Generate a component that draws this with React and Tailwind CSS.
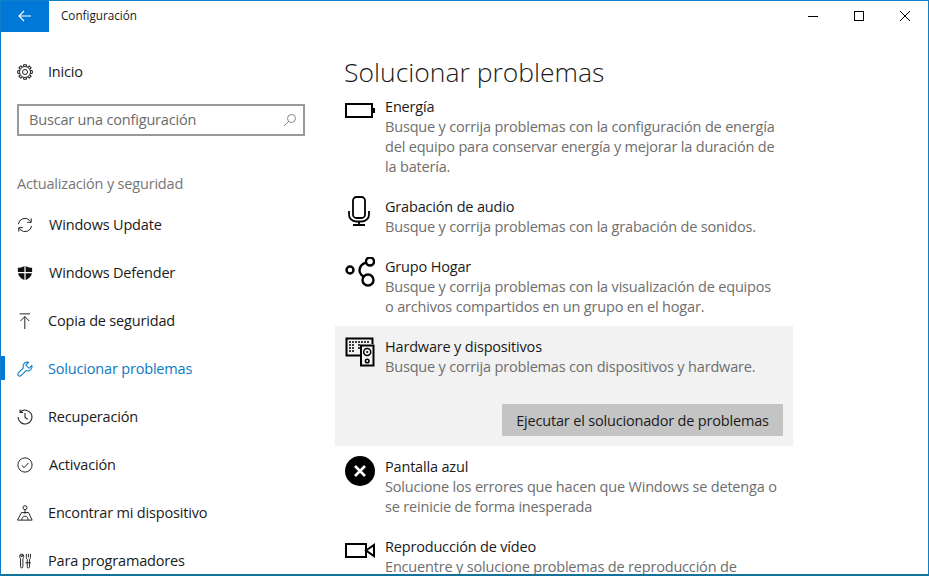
const ui = "font-['Open_Sans','Noto_Sans',sans-serif]";

function Gear() {
  const teeth = [0, 45, 90, 135, 180, 225, 270, 315];
  return (
    <svg width="16" height="16" viewBox="0 0 16 16" fill="none" stroke="#222" strokeWidth="1">
      <circle cx="8" cy="8" r="2.500" />
      <circle cx="8" cy="8" r="5.500" />
      {teeth.map((a) => (
        <path key={a} d="M6.600 2.600V.700h2.800v1.900" transform={`rotate(${a} 8 8)`} />
      ))}
    </svg>
  );
}

function Update() {
  return (
    <svg width="16" height="16" viewBox="0 0 18 18" fill="none" stroke="#222" strokeWidth="1.100">
      <path d="M1.500 8a7.500 7.500 0 0 1 12.800-4.200l1.500 1.700" />
      <path d="M16 1.500V6h-4.500" />
      <path d="M16.500 10a7.500 7.500 0 0 1-12.800 4.200l-1.500-1.700" />
      <path d="M2 16.500V12h4.500" />
    </svg>
  );
}

function Shield() {
  return (
    <svg width="16" height="16" viewBox="0 0 18 18">
      <path d="M8.300 1C6.500 2.400 4 3 1 3v5h7.300zM9.700 1c1.800 1.400 4.300 2 7.300 2v5H9.700zM1.200 9.400h7.100V17C5 15.800 2 13.500 1.200 9.400zM9.700 9.400h7.100C16 13.500 13 15.800 9.700 17z" fill="#111" />
    </svg>
  );
}

function Backup() {
  return (
    <svg width="16" height="16" viewBox="0 0 18 18" fill="none" stroke="#222" strokeWidth="1.100">
      <path d="M3 1h11.500M8.800 18V4M3.800 9l5-5 5 5" />
    </svg>
  );
}

function Wrench() {
  return (
    <svg width="16" height="16" viewBox="0 0 18 18" fill="none" stroke="#0b7ac4" strokeWidth="1.200">
      <path d="M11.500 1.200a4.800 4.800 0 0 0-4.300 6.600L1.600 13.400a2.100 2.100 0 0 0 3 3L10.200 10.800a4.800 4.800 0 0 0 6.500-5.700L13.500 8.200l-3.600-3.700 3-3a4.800 4.800 0 0 0-1.400-.3z" />
    </svg>
  );
}

function History() {
  return (
    <svg width="16" height="16" viewBox="0 0 18 18" fill="none" stroke="#222" strokeWidth="1.200">
      <path d="M3.500 3.500A7.800 7.800 0 1 1 1.200 9" />
      <path d="M3.500 .500v3.300h3.300M9 4.500V9.500l3 2" />
    </svg>
  );
}

function Check() {
  return (
    <svg width="16" height="16" viewBox="0 0 18 18" fill="none" stroke="#222" strokeWidth="1.100">
      <circle cx="9" cy="9" r="8" />
      <path d="M5.500 9.500l2.500 2.500 5-5.500" />
    </svg>
  );
}

function Find() {
  return (
    <svg width="16" height="16" viewBox="0 0 18 18" fill="none" stroke="#222" strokeWidth="1.100">
      <circle cx="9" cy="3" r="2.200" />
      <path d="M9 5.200V10M5 8.500h8L17 17H.500zM5.500 17c0-2.800 1.500-4.500 3.500-4.500s3.500 1.700 3.500 4.500" />
    </svg>
  );
}

function Dev() {
  return (
    <svg width="16" height="16" viewBox="0 0 18 18" fill="none" stroke="#222" strokeWidth="1.100">
      <path d="M4.500 1C3.500 1.500 3 2.500 3 4s.8 2 1 2.500V15.500a1.300 1.300 0 0 0 2.600 0V6.500C6.800 6 7.500 5.500 7.500 4S7 1.500 6 1v3H4.500z" />
      <path d="M10.500 1v4c0 1 .5 1.500 1 2v8.500a1.300 1.300 0 0 0 2.600 0V7c.5-.5 1-1 1-2V1M12.800 1v4M9.500 11h6" />
    </svg>
  );
}

function Battery() {
  return (
    <svg width="30" height="15" viewBox="0 0 30 15" fill="none">
      <rect x="1" y="1" width="26" height="13" stroke="#000" strokeWidth="2" />
      <rect x="28" y="5" width="2" height="5" fill="#000" />
    </svg>
  );
}

function Mic() {
  return (
    <svg width="30" height="30" viewBox="0 0 30 30" fill="none" stroke="#000" strokeWidth="1.800">
      <rect x="8" y="1" width="12" height="21" rx="3.500" />
      <path d="M4 15v3.500a7 7 0 0 0 7 7h6a7 7 0 0 0 7-7V15M14 25.500V29M8 29h12" />
    </svg>
  );
}

function Group() {
  return (
    <svg width="30" height="32" viewBox="0 0 30 32" fill="none" stroke="#000" strokeWidth="2.400">
      <circle cx="5" cy="13" r="3.500" />
      <circle cx="25" cy="4.500" r="4" />
      <circle cx="23" cy="23" r="5.500" />
      <path d="M21.500 5.500C15 7 11 15 19 20" />
    </svg>
  );
}

function Hardware() {
  return (
    <svg width="30" height="30" viewBox="0 0 30 30" fill="none" stroke="#000">
      <path d="M15 18.500H1.500V1.500h26V7" strokeWidth="2" />
      <path d="M4 5h21M4 8h6M4 11h6M4 14h6M13 8h3M13 11h3" strokeWidth="1.500" strokeDasharray="2 1" />
      <rect x="16" y="8.500" width="12.500" height="20" fill="#f2f2f2" strokeWidth="2" />
      <circle cx="22.200" cy="15" r="3.500" strokeWidth="1.500" />
      <circle cx="22.200" cy="15" r="1" fill="#000" stroke="none" />
      <circle cx="22.200" cy="24" r="1.800" strokeWidth="1.500" />
    </svg>
  );
}

function Blue() {
  return (
    <svg width="30" height="30" viewBox="0 0 30 30">
      <circle cx="15" cy="15" r="15" fill="#000" />
      <path d="M10 10l10 10M20 10L10 20" stroke="#fff" strokeWidth="2.600" />
    </svg>
  );
}

function Video() {
  return (
    <svg width="30" height="15" viewBox="0 0 30 15" fill="none" stroke="#000" strokeWidth="2">
      <rect x="1" y="1" width="20" height="13" />
      <path d="M21 7.500L29 2v11z" />
    </svg>
  );
}

const nav = [
  { label: "Windows Update", icon: <Update />, gap: "ml-[16px]" },
  { label: "Windows Defender", icon: <Shield />, gap: "ml-[16px]" },
  { label: "Copia de seguridad", icon: <Backup />, gap: "ml-[15px]" },
  { label: "Solucionar problemas", icon: <Wrench />, gap: "ml-[15px]", active: true },
  { label: "Recuperación", icon: <History />, gap: "ml-[15px]" },
  { label: "Activación", icon: <Check />, gap: "ml-[16px]" },
  { label: "Encontrar mi dispositivo", icon: <Find />, gap: "ml-[15px]" },
  { label: "Para programadores", icon: <Dev />, gap: "ml-[15px]" },
];

const items = [
  {
    title: "Energía",
    icon: <Battery />,
    iconTop: "mt-[6px]",
    desc: "Busque y corrija problemas con la configuración de energía del equipo para conservar energía y mejorar la duración de la batería.",
  },
  {
    title: "Grabación de audio",
    icon: <Mic />,
    iconTop: "-mt-[1px]",
    desc: "Busque y corrija problemas con la grabación de sonidos.",
  },
  {
    title: "Grupo Hogar",
    icon: <Group />,
    iconTop: "mt-0",
    desc: "Busque y corrija problemas con la visualización de equipos o archivos compartidos en un grupo en el hogar.",
  },
  {
    title: "Hardware y dispositivos",
    icon: <Hardware />,
    iconTop: "mt-0",
    desc: "Busque y corrija problemas con dispositivos y hardware.",
    selected: true,
  },
  {
    title: "Pantalla azul",
    icon: <Blue />,
    iconTop: "-mt-[1px]",
    desc: "Solucione los errores que hacen que Windows se detenga o se reinicie de forma inesperada",
  },
  {
    title: "Reproducción de vídeo",
    icon: <Video />,
    iconTop: "mt-[6px]",
    desc: "Encuentre y solucione problemas de reproducción de",
  },
];

export default function App() {
  return (
    <div className={`${ui} w-[929px] h-[576px] overflow-hidden bg-white border border-b-2 border-[#0f7fc8] border-b-[#13729c] text-[14.500px] tracking-[-0.18px] text-[#1a1a1a] flex flex-col`}>
      <header className="h-[31px] flex items-center shrink-0">
        <button className="w-[48px] h-full pb-[2px] bg-[#0078d7] flex items-center justify-center">
          <svg width="14" height="12" viewBox="0 0 14 12" fill="none" stroke="#fff" strokeWidth="1.200">
            <path d="M13 6H1M6 1L1 6l5 5" />
          </svg>
        </button>
        <span className="ml-[12px] pb-[1px] text-[11.700px] tracking-normal">Configuración</span>
        <div className="ml-auto flex items-center gap-[36px] mr-[18px] pb-[1px]">
          <svg width="10" height="10" viewBox="0 0 10 10" stroke="#000" strokeWidth="1">
            <path d="M0 5.500h10" />
          </svg>
          <svg width="10" height="10" viewBox="0 0 10 10" fill="none" stroke="#000" strokeWidth="1">
            <rect x=".500" y=".500" width="9" height="9" />
          </svg>
          <svg width="10" height="10" viewBox="0 0 10 10" stroke="#000" strokeWidth="1">
            <path d="M0 0l10 10M10 0L0 10" />
          </svg>
        </div>
      </header>

      <div className="flex flex-1 min-h-0">
        <aside className="w-[334px] shrink-0">
          <div className="mt-[16px] h-[48px] pl-[16px] flex items-center">
            <Gear />
            <span className="ml-[15px]">Inicio</span>
          </div>
          <div className="mt-[8px] ml-[16px] w-[288px] h-[32px] border-2 border-[#999] flex items-center pl-[10px] pr-[6px] text-[#6b6b6b]">
            <span>Buscar una configuración</span>
            <svg className="ml-auto" width="14" height="14" viewBox="0 0 14 14" fill="none" stroke="#888" strokeWidth="1">
              <circle cx="8.500" cy="5.500" r="4" />
              <path d="M5.700 8.300L1 13" />
            </svg>
          </div>
          <div className="mt-[36px] ml-[16px] h-[24px] leading-[24px] text-[#767676]">Actualización y seguridad</div>
          <nav className="mt-[5px]">
            {nav.map((n) => (
              <div key={n.label} className={`h-[48px] flex items-center pl-[16px] relative ${n.active ? "text-[#0b7ac4]" : ""}`}>
                {n.active && <span className="absolute left-0 top-[11px] w-[4px] h-[24px] bg-[#0078d7]" />}
                {n.icon}
                <span className={n.gap}>{n.label}</span>
              </div>
            ))}
          </nav>
        </aside>

        <main className="w-[458px] shrink-0">
          <h1 className="h-[55px] pt-[24px] pl-[9px] text-[26.500px] tracking-normal font-light leading-[32px]">Solucionar problemas</h1>
          {items.map((it) => (
            <div key={it.title} className={`p-[10px] flex ${it.selected ? "bg-[#f2f2f2] -mt-[1px] pt-[11px] mb-[1px]" : ""}`}>
              <div className={`w-[40px] shrink-0 ${it.iconTop}`}>{it.icon}</div>
              <div className="flex-1 leading-[20px]">
                <div>{it.title}</div>
                <p className="text-[#6e6e6e]">{it.desc}</p>
                {it.selected && (
                  <div className="flex justify-end mt-[27px]">
                    <button className="w-[281px] h-[32px] pt-[2px] bg-[#c4c4c4]">Ejecutar el solucionador de problemas</button>
                  </div>
                )}
              </div>
            </div>
          ))}
        </main>
      </div>
    </div>
  );
}
